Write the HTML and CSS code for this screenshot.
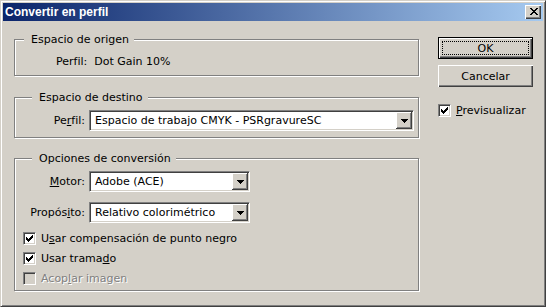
FILE: index.html
```html
<!DOCTYPE html>
<html lang="es">
<head>
  <meta charset="UTF-8" />
  <title>Convertir en perfil</title>
  <link rel="stylesheet" href="styles.css">
</head>
<body>
  <div class="window">
    <div class="titlebar">
      <span class="title">Convertir en perfil</span>
      <span class="close">
        <svg width="8" height="7" viewBox="0 0 8 7" shape-rendering="crispEdges"><path d="M0 0h2v1h-2z M6 0h2v1h-2z M1 1h2v1h-2z M5 1h2v1h-2z M2 2h4v1h-4z M3 3h2v1h-2z M2 4h4v1h-4z M1 5h2v1h-2z M5 5h2v1h-2z M0 6h2v1h-2z M6 6h2v1h-2z" fill="#000"/></svg>
      </span>
    </div>

    <div class="main">
      <div class="left">
        <!-- origen -->
        <div class="group group-origin">
          <span class="group-title">Espacio de origen</span>
          <div class="info-row">
            <span>Perfil:</span>
            <span>Dot Gain 10%</span>
          </div>
        </div>

        <!-- destino -->
        <div class="group group-dest">
          <span class="group-title">Espacio de destino</span>
          <div class="field-grid">
            <span class="field-label">Pe<u>r</u>fil:</span>
            <div class="combo">
              <span class="combo-text">Espacio de trabajo CMYK - PSRgravureSC</span>
              <span class="combo-btn"><svg width="7" height="4" viewBox="0 0 7 4" shape-rendering="crispEdges"><path d="M0 0h7v1h-7z M1 1h5v1h-5z M2 2h3v1h-3z M3 3h1v1h-1z" fill="#000"/></svg></span>
            </div>
          </div>
        </div>

        <!-- opciones -->
        <div class="group group-opts">
          <span class="group-title">Opciones de conversión</span>
          <div class="field-grid field-grid-opts">
            <span class="field-label"><u>M</u>otor:</span>
            <div class="combo combo-short">
              <span class="combo-text">Adobe (ACE)</span>
              <span class="combo-btn"><svg width="7" height="4" viewBox="0 0 7 4" shape-rendering="crispEdges"><path d="M0 0h7v1h-7z M1 1h5v1h-5z M2 2h3v1h-3z M3 3h1v1h-1z" fill="#000"/></svg></span>
            </div>
            <span class="field-label">Propós<u>i</u>to:</span>
            <div class="combo combo-short">
              <span class="combo-text">Relativo colorimétrico</span>
              <span class="combo-btn"><svg width="7" height="4" viewBox="0 0 7 4" shape-rendering="crispEdges"><path d="M0 0h7v1h-7z M1 1h5v1h-5z M2 2h3v1h-3z M3 3h1v1h-1z" fill="#000"/></svg></span>
            </div>
          </div>
          <div class="checks">
            <div class="check">
              <span class="box"><svg width="13" height="13" viewBox="0 0 13 13" shape-rendering="crispEdges"><path d="M3 5h1v3h-1z M4 6h1v3h-1z M5 7h1v3h-1z M6 6h1v3h-1z M7 5h1v3h-1z M8 4h1v3h-1z M9 3h1v3h-1z" fill="#000"/></svg></span>
              <span>U<u>s</u>ar compensación de punto negro</span>
            </div>
            <div class="check">
              <span class="box"><svg width="13" height="13" viewBox="0 0 13 13" shape-rendering="crispEdges"><path d="M3 5h1v3h-1z M4 6h1v3h-1z M5 7h1v3h-1z M6 6h1v3h-1z M7 5h1v3h-1z M8 4h1v3h-1z M9 3h1v3h-1z" fill="#000"/></svg></span>
              <span>Usar trama<u>d</u>o</span>
            </div>
            <div class="check disabled">
              <span class="box"></span>
              <span>Acop<u>l</u>ar imagen</span>
            </div>
          </div>
        </div>
      </div>

      <div class="right">
        <div class="btn btn-default"><span class="focus">OK</span></div>
        <div class="btn">Cancelar</div>
        <div class="check check-preview">
          <span class="box"><svg width="13" height="13" viewBox="0 0 13 13" shape-rendering="crispEdges"><path d="M3 5h1v3h-1z M4 6h1v3h-1z M5 7h1v3h-1z M6 6h1v3h-1z M7 5h1v3h-1z M8 4h1v3h-1z M9 3h1v3h-1z" fill="#000"/></svg></span>
          <span><u>P</u>revisualizar</span>
        </div>
      </div>
    </div>
  </div>
</body>
</html>
```

FILE: styles.css
```css
body {
  margin: 0;
  background-color: #d4d0c8;
  font-family: "DejaVu Sans", sans-serif;
  font-size: 11px;
  line-height: 13px;
  color: #000;
}

u {
  text-underline-offset: 1px;
}

.window {
  width: 546px;
  height: 307px;
  box-sizing: border-box;
  border: 1px solid;
  border-color: #d4d0c8 #404040 #404040 #d4d0c8;
  box-shadow: inset 1px 1px 0 #fff, inset -1px -1px 0 #808080;
  padding: 2px;
  background-color: #d4d0c8;
  display: flex;
  flex-direction: column;
}

.titlebar {
  height: 18px;
  flex: none;
  display: flex;
  align-items: center;
  justify-content: space-between;
  padding: 0 2px 0 2px;
  background: linear-gradient(to right, #0a246a, #a6caf0);
}

.title {
  color: #fff;
  font-family: "Liberation Sans", sans-serif;
  font-weight: bold;
  font-size: 12px;
}

.close {
  width: 16px;
  height: 14px;
  box-sizing: border-box;
  display: flex;
  align-items: center;
  justify-content: center;
  padding: 0 0 1px 1px;
  background-color: #d4d0c8;
  box-shadow: inset 1px 1px 0 #fff, inset -1px -1px 0 #404040, inset -2px -2px 0 #808080;
}

.main {
  flex: 1;
  display: flex;
  gap: 19px;
  padding: 18px 0 0 11px;
}

.left {
  width: 405px;
  display: flex;
  flex-direction: column;
  gap: 20px;
}

/* etched group box */
.group {
  border: 1px solid #808080;
  box-shadow: inset 1px 1px 0 #fff, 1px 1px 0 #fff;
  display: flex;
  flex-direction: column;
}

.group-title {
  align-self: flex-start;
  margin: -7px 0 0 9px;
  padding: 0 5px 0 7px;
  background-color: #d4d0c8;
}

.group-origin {
  padding-bottom: 7px;
}

.info-row {
  display: flex;
  gap: 7px;
  margin-top: 9px;
  padding-left: 41px;
}

.group-dest {
  margin-top: 1px;
  padding: 0 4px 6px 8px;
}

.group-opts {
  padding: 0 4px 5px 8px;
}

.field-grid {
  display: grid;
  grid-template-columns: 62px 1fr;
  column-gap: 4px;
  align-items: center;
  margin-top: 6px;
}

.field-grid-opts {
  grid-template-columns: 62px 161px;
  row-gap: 10px;
}

.field-label {
  justify-self: end;
}

/* combo box */
.combo {
  height: 21px;
  box-sizing: border-box;
  border: 1px solid;
  border-color: #808080 #fff #fff #808080;
  box-shadow: inset 1px 1px 0 #404040, inset -1px -1px 0 #d4d0c8;
  padding: 1px;
  background-color: #fff;
  display: flex;
  align-items: center;
}

.combo-text {
  flex: 1;
  padding-left: 4px;
  white-space: nowrap;
}

.combo-btn {
  width: 16px;
  height: 100%;
  box-sizing: border-box;
  display: flex;
  align-items: center;
  justify-content: center;
  padding-left: 1px;
  background-color: #d4d0c8;
  box-shadow: inset -1px -1px 0 #404040, inset 1px 1px 0 #fff, inset -2px -2px 0 #808080;
}

/* check boxes */
.checks {
  display: flex;
  flex-direction: column;
  gap: 7px;
  margin-top: 9px;
}

.check {
  display: flex;
  align-items: center;
  gap: 5px;
  height: 13px;
  white-space: nowrap;
}

.box {
  width: 13px;
  height: 13px;
  box-sizing: border-box;
  flex: none;
  position: relative;
  background-color: #fff;
  border: 1px solid;
  border-color: #808080 #fff #fff #808080;
  box-shadow: inset 1px 1px 0 #404040, inset -1px -1px 0 #d4d0c8;
}

.box svg {
  position: absolute;
  left: -1px;
  top: -1px;
}

.check.disabled {
  color: #808080;
  text-shadow: 1px 1px 0 #fff;
}

.check.disabled .box {
  background-color: #d4d0c8;
}

/* buttons column */
.right {
  width: 95px;
  margin-top: -2px;
  display: flex;
  flex-direction: column;
}

.btn {
  height: 22px;
  box-sizing: border-box;
  display: flex;
  align-items: center;
  justify-content: center;
  background-color: #d4d0c8;
  box-shadow: inset 1px 1px 0 #fff, inset -1px -1px 0 #404040, inset -2px -2px 0 #808080;
  margin-bottom: 6px;
}

.btn-default {
  border: 1px solid #000;
  padding: 3px;
}

.focus {
  flex: 1;
  align-self: stretch;
  display: flex;
  align-items: center;
  justify-content: center;
  border: 1px dotted #000;
}

.check-preview {
  margin-top: 11px;
}
```
